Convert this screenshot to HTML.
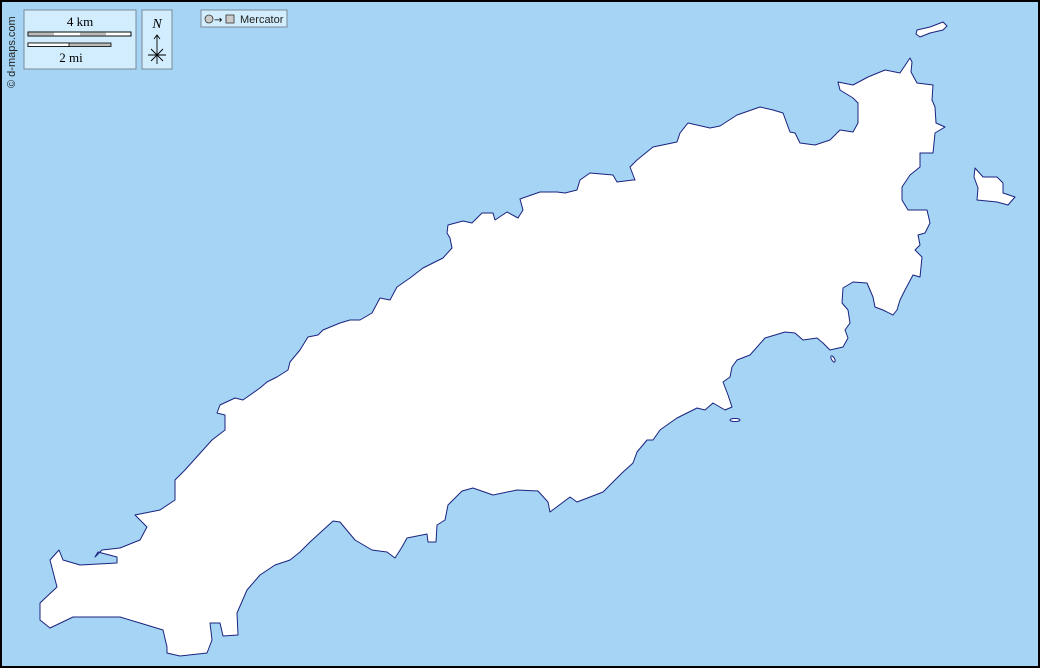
<!DOCTYPE html>
<html><head><meta charset="utf-8"><style>
html,body{margin:0;padding:0;}
body{width:1040px;height:668px;overflow:hidden;background:#a5d4f5;}
svg{display:block}
</style></head><body>
<svg width="1040" height="668" viewBox="0 0 1040 668" xmlns="http://www.w3.org/2000/svg">
<rect x="1" y="1" width="1038" height="666" fill="#a5d4f5" stroke="#000" stroke-width="2"/>
<g fill="#fff" stroke="#1a237e" stroke-width="1" stroke-linejoin="round">
<path d="M910,58 L912,62 911,72 917,83 933,85 932,100 935,107 936,123 945,127 935,133 933,153 920,153 920,167 910,175 902,187 902,200 908,210 927,210 930,223 925,233 918,235 920,245 915,250 922,257 920,277 913,275 905,290 900,300 897,310 893,315 883,310 875,307 873,297 867,283 853,282 843,288 842,303 848,310 850,323 845,330 848,338 843,347 830,350 823,343 817,338 803,340 795,333 785,332 765,338 750,355 737,360 732,367 730,377 723,382 728,395 732,407 725,410 713,403 705,410 697,408 677,418 667,425 660,430 653,440 647,440 637,452 633,463 622,473 603,492 577,502 570,497 550,512 548,502 538,491 517,490 493,495 473,488 462,491 448,505 445,520 437,525 436,542 428,542 427,534 407,538 402,547 395,558 387,552 372,550 355,540 340,522 333,521 310,542 300,552 290,560 275,565 260,575 247,590 237,613 238,635 223,636 220,623 210,623 212,640 207,653 180,656 167,653 167,647 163,630 140,623 120,617 73,617 50,628 40,620 40,603 57,587 50,560 59,550 63,560 80,565 117,563 117,557 98,552 95,557 102,550 120,548 140,540 147,527 135,515 160,510 175,500 175,480 185,470 203,450 212,440 225,430 225,415 217,413 220,405 235,398 243,400 260,388 267,382 277,377 288,370 290,362 300,350 308,337 318,335 323,330 340,323 350,320 360,320 372,313 380,298 390,300 397,287 410,278 423,268 443,258 452,248 450,238 447,233 448,225 463,221 472,223 482,213 493,213 495,220 507,212 518,218 523,210 520,199 540,192 557,192 565,193 577,190 580,180 590,173 613,175 617,182 633,180 635,180 630,167 637,160 653,147 677,142 680,133 688,123 710,128 720,126 737,115 760,107 773,110 783,113 790,132 795,133 800,143 815,145 830,140 840,130 853,132 858,123 858,103 853,98 840,90 838,82 853,85 868,77 885,70 900,73 Z"/>
<path d="M917,30 L930,27 943,22 947,26 943,30 930,33 920,37 916,34 Z"/>
<path d="M975,168 L983,177 997,177 1003,183 1003,193 1015,197 1008,205 997,202 977,200 978,188 974,177 Z"/>
<ellipse cx="833" cy="359" rx="1.5" ry="3.5" transform="rotate(-30 833 359)"/>
<ellipse cx="735" cy="420" rx="5" ry="1.5"/>
</g>
<text x="15" y="88" transform="rotate(-90 15 88)" font-family="Liberation Sans, sans-serif" font-size="11" fill="#222">© d-maps.com</text>
<rect x="24" y="10" width="112" height="59" fill="#d2edfd" stroke="#7a8a99"/>
<text x="80" y="26" text-anchor="middle" font-family="Liberation Serif, serif" font-size="13">4 km</text>
<rect x="28" y="32" width="103" height="4" fill="#fff" stroke="#000" stroke-width="0.8"/>
<rect x="28" y="32" width="26" height="4" fill="#bbb"/><rect x="80" y="32" width="26" height="4" fill="#bbb"/>
<rect x="28" y="32" width="103" height="4" fill="none" stroke="#000" stroke-width="0.8"/>
<rect x="28" y="43" width="83" height="3.5" fill="#bbb" stroke="#000" stroke-width="0.8"/>
<rect x="28" y="43" width="41" height="3.5" fill="#fff" stroke="#000" stroke-width="0.8"/>
<text x="71" y="62" text-anchor="middle" font-family="Liberation Serif, serif" font-size="13">2 mi</text>
<rect x="142" y="10" width="30" height="59" fill="#d2edfd" stroke="#7a8a99"/>
<text x="157" y="28" text-anchor="middle" font-family="Liberation Serif, serif" font-style="italic" font-size="14">N</text>
<g stroke="#000" stroke-width="0.9" fill="none"><path d="M157,64 V35 M154,39 L157,35 160,39 M148,55 H166 M151,49 L163,61 M163,49 L151,61"/></g>
<rect x="201" y="10" width="86" height="17" fill="#d2edfd" stroke="#7a8a99"/>
<circle cx="209" cy="19" r="4" fill="#ccc" stroke="#333" stroke-width="0.8"/>
<text x="214" y="23" font-family="DejaVu Sans, sans-serif" font-size="10">→</text>
<rect x="226" y="15" width="8" height="8" fill="#ccc" stroke="#333" stroke-width="0.8"/>
<text x="240" y="23" font-family="Liberation Sans, sans-serif" font-size="11" fill="#222">Mercator</text>
</svg>
</body></html>
